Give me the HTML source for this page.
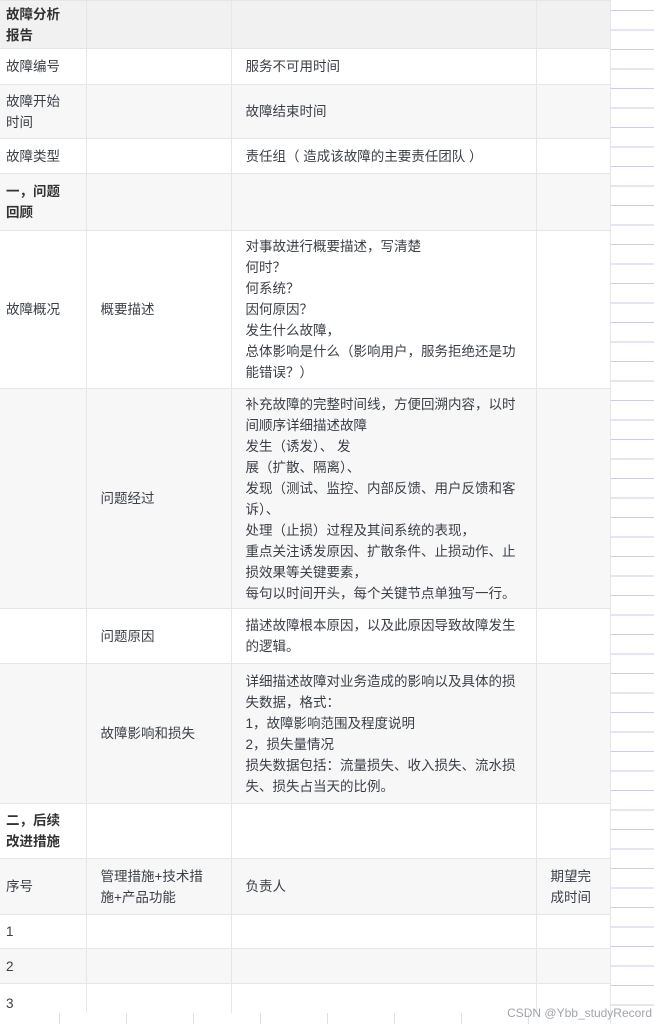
<!DOCTYPE html>
<html><head><meta charset="utf-8"><style>
*{margin:0;padding:0;box-sizing:border-box}
body{width:654px;height:1024px;overflow:hidden;background:#fff;font-family:"Liberation Sans","Noto Sans CJK SC",sans-serif;font-size:13.5px;color:#3a3f46;position:relative}
.grid{position:absolute;left:610px;top:0;width:44px;height:1024px;background:repeating-linear-gradient(to bottom,transparent 0,transparent 10px,#c9cde6 10px,#c9cde6 11px,transparent 11px,transparent 19.5px)}
table{position:absolute;left:0;top:0;border-collapse:collapse;table-layout:fixed;width:610px;background:#fff}
td{border:1px solid #e3e6ea;vertical-align:middle;line-height:21px;padding:0 14px 0 14px}
td:first-child{padding-left:6px;padding-right:6px;border-left:none}
td:last-child{border-right:1px solid #e3e6ea;padding-right:10px}
.g td{background:#f7f7f8}
.h td{background:#f1f1f2}
b{font-weight:bold;color:#333}
.ticks{position:absolute;left:0;top:1013px;width:610px;height:11px;background:#fff}
.ticks i{position:absolute;top:0;width:1px;height:11px;background:#dcdfe4}
.wm{position:absolute;right:2px;top:1006px;font-size:12px;color:#a0a4ab;font-family:"Liberation Sans",sans-serif}
</style></head><body>
<div class="grid"></div>
<table>
<colgroup><col style="width:86px"><col style="width:145px"><col style="width:305px"><col style="width:74px"></colgroup>
<tr class="h" style="height:48px"><td><b>故障分析<br>报告</b></td><td></td><td></td><td></td></tr>
<tr style="height:36px"><td>故障编号</td><td></td><td>服务不可用时间</td><td></td></tr>
<tr class="g" style="height:54px"><td>故障开始<br>时间</td><td></td><td>故障结束时间</td><td></td></tr>
<tr style="height:35px"><td>故障类型</td><td></td><td>责任组（ 造成该故障的主要责任团队 ）</td><td></td></tr>
<tr class="g" style="height:57px"><td><b>一，问题<br>回顾</b></td><td></td><td></td><td></td></tr>
<tr style="height:158px"><td>故障概况</td><td>概要描述</td><td>对事故进行概要描述，写清楚<br>何时？<br>何系统？<br>因何原因？<br>发生什么故障，<br>总体影响是什么（影响用户，服务拒绝还是功能错误？）</td><td></td></tr>
<tr class="g" style="height:220px"><td></td><td>问题经过</td><td>补充故障的完整时间线，方便回溯内容，以时间顺序详细描述故障<br>发生（诱发）、 发<br>展（扩散、隔离）、<br>发现（测试、监控、内部反馈、用户反馈和客诉）、<br>处理（止损）过程及其间系统的表现，<br>重点关注诱发原因、扩散条件、止损动作、止损效果等关键要素，<br>每句以时间开头，每个关键节点单独写一行。</td><td></td></tr>
<tr style="height:55px"><td></td><td>问题原因</td><td>描述故障根本原因，以及此原因导致故障发生的逻辑。</td><td></td></tr>
<tr class="g" style="height:140px"><td></td><td>故障影响和损失</td><td>详细描述故障对业务造成的影响以及具体的损失数据，格式：<br>1，故障影响范围及程度说明<br>2，损失量情况<br>损失数据包括：流量损失、收入损失、流水损失、损失占当天的比例。</td><td></td></tr>
<tr style="height:55px"><td><b>二，后续<br>改进措施</b></td><td></td><td></td><td></td></tr>
<tr class="g" style="height:56px"><td>序号</td><td>管理措施+技术措<br>施+产品功能</td><td>负责人</td><td>期望完<br>成时间</td></tr>
<tr style="height:34px"><td>1</td><td></td><td></td><td></td></tr>
<tr class="g" style="height:35px"><td>2</td><td></td><td></td><td></td></tr>
<tr style="height:40px"><td>3</td><td></td><td></td><td></td></tr>
</table>
<div class="ticks"><i style="left:59px"></i><i style="left:126px"></i><i style="left:193px"></i><i style="left:260px"></i><i style="left:327px"></i><i style="left:394px"></i><i style="left:461px"></i><i style="left:528px"></i></div>
<div class="wm">CSDN @Ybb_studyRecord</div>
</body></html>
